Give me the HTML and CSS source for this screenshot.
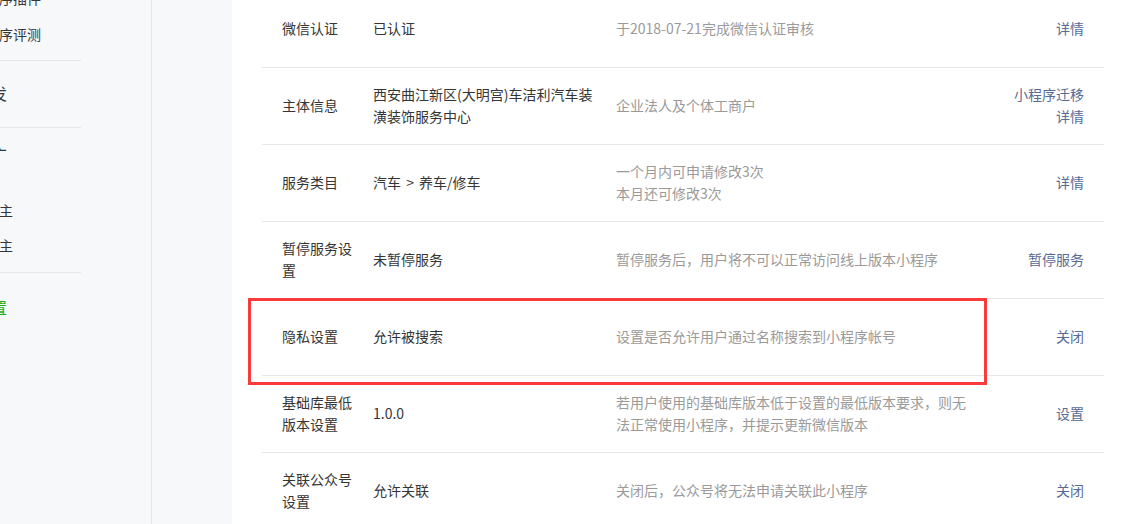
FILE: index.html
```html
<!DOCTYPE html>
<html lang="zh-CN">
<head>
<meta charset="utf-8">
<title>设置</title>
<link rel="stylesheet" href="styles.css">
</head>
<body>
<div class="page">
  <aside class="sidebar">
    <nav class="nav">
      <div class="group group-first">
        <div class="item">小程序插件</div>
        <div class="item">小程序评测</div>
      </div>
      <div class="group group-dev">
        <div class="heading">开发</div>
      </div>
      <div class="group group-promo">
        <div class="heading">推广</div>
        <div class="items">
          <div class="item">流量主</div>
          <div class="item">广告主</div>
        </div>
      </div>
      <div class="group group-set">
        <div class="heading heading-active">设置</div>
      </div>
    </nav>
  </aside>
  <div class="spacer"></div>
  <main class="main">
    <div class="table">
      <div class="row">
        <div class="label">微信认证</div>
        <div class="value">已认证</div>
        <div class="desc">于2018-07-21完成微信认证审核</div>
        <div class="action"><a>详情</a></div>
      </div>
      <div class="row">
        <div class="label">主体信息</div>
        <div class="value">西安曲江新区(大明宫)车洁利汽车装潢装饰服务中心</div>
        <div class="desc">企业法人及个体工商户</div>
        <div class="action"><a>小程序迁移</a><a>详情</a></div>
      </div>
      <div class="row">
        <div class="label">服务类目</div>
        <div class="value">汽车 &gt; 养车/修车</div>
        <div class="desc">一个月内可申请修改3次<br>本月还可修改3次</div>
        <div class="action"><a>详情</a></div>
      </div>
      <div class="row">
        <div class="label">暂停服务设置</div>
        <div class="value">未暂停服务</div>
        <div class="desc">暂停服务后，用户将不可以正常访问线上版本小程序</div>
        <div class="action"><a>暂停服务</a></div>
      </div>
      <div class="row row-marked">
        <div class="label">隐私设置</div>
        <div class="value">允许被搜索</div>
        <div class="desc">设置是否允许用户通过名称搜索到小程序帐号</div>
        <div class="action"><a>关闭</a></div>
        <div class="highlight"></div>
      </div>
      <div class="row">
        <div class="label">基础库最低版本设置</div>
        <div class="value">1.0.0</div>
        <div class="desc">若用户使用的基础库版本低于设置的最低版本要求，则无法正常使用小程序，并提示更新微信版本</div>
        <div class="action"><a>设置</a></div>
      </div>
      <div class="row">
        <div class="label">关联公众号设置</div>
        <div class="value">允许关联</div>
        <div class="desc">关闭后，公众号将无法申请关联此小程序</div>
        <div class="action"><a>关闭</a></div>
      </div>
    </div>
  </main>
</div>
</body>
</html>
```

FILE: styles.css
```css
html, body {
  margin: 0;
  padding: 0;
  background: #ffffff;
}

body {
  font-family: "Noto Sans CJK SC", "Microsoft YaHei", "Noto Sans", sans-serif;
  font-size: 14px;
  line-height: 22px;
  color: #353535;
  overflow: hidden;
  height: 524px;
}

.page {
  display: flex;
  height: 524px;
  overflow: hidden;
}

/* ---------- sidebar ---------- */
.sidebar {
  width: 151px;
  flex: none;
  background: #f7f8fa;
  border-right: 1px solid #e4e6ea;
  overflow: hidden;
}

.nav {
  margin-top: -20px;
}

.group {
  border-bottom: 1px solid #e7e7eb;
  width: 81px;
}

.group-set {
  border-bottom: none;
}

.item {
  height: 36px;
  line-height: 36px;
  margin-left: -29px;
  white-space: nowrap;
  color: #353535;
  font-size: 14px;
}

.group-first {
  padding-bottom: 8px;
}

.heading {
  height: 34px;
  line-height: 34px;
  margin-left: -25px;
  white-space: nowrap;
  font-size: 16px;
  color: #353535;
}

.heading-active {
  color: #1aad19;
}

.group-dev {
  padding: 15px 0 17px;
}

.group-promo {
  padding: 9px 0 9px;
}

.group-promo .items {
  margin-top: 22px;
}

.group-promo .item {
  height: 35px;
  line-height: 35px;
}

.group-set {
  padding-top: 17px;
}

.spacer {
  width: 80px;
  flex: none;
  background: #f7f8fa;
}

/* ---------- main table ---------- */
.main {
  flex: 1;
  padding-left: 30px;
}

.table {
  width: 842px;
  margin-top: -9px;
}

.row {
  position: relative;
  display: grid;
  grid-template-columns: 91px 243px 356px 1fr;
  align-items: center;
  box-sizing: border-box;
  min-height: 77px;
  padding: 15px 20px 17px;
  border-bottom: 1px solid #e7e7eb;
}

.label {
  width: 78px;
  color: #353535;
}

.value {
  width: 226px;
  color: #353535;
  word-spacing: 2px;
}

.desc {
  color: #9a9a9a;
}

.action {
  text-align: right;
}

.action a {
  display: block;
  color: #576b95;
  text-decoration: none;
  cursor: pointer;
}

/* annotation box drawn over the privacy row */
.highlight {
  position: absolute;
  left: -14px;
  top: -1px;
  width: 739px;
  height: 87px;
  box-sizing: border-box;
  border: 3px solid #fb3a3a;
  pointer-events: none;
}
```
